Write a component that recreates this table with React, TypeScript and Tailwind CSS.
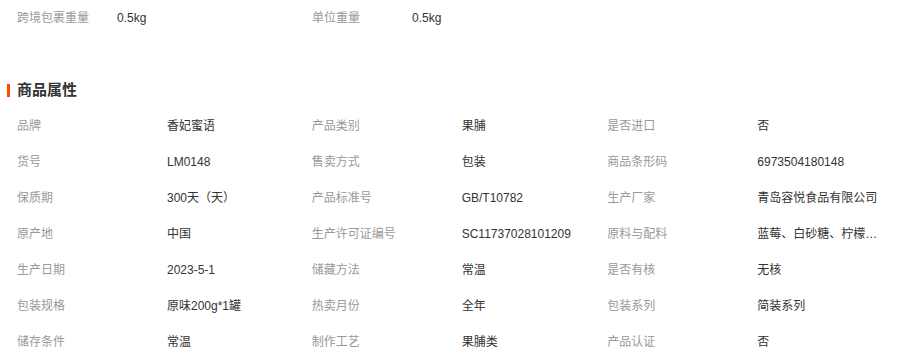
import React from "react";

const font = {
  fontFamily: '"Liberation Sans", Arial, "Noto Sans CJK SC", sans-serif',
};

const rows: [string, string][][] = [
  [["品牌", "香妃蜜语"], ["产品类别", "果脯"], ["是否进口", "否"]],
  [["货号", "LM0148"], ["售卖方式", "包装"], ["商品条形码", "6973504180148"]],
  [["保质期", "300天（天）"], ["产品标准号", "GB/T10782"], ["生产厂家", "青岛容悦食品有限公司"]],
  [["原产地", "中国"], ["生产许可证编号", "SC11737028101209"], ["原料与配料", "蓝莓、白砂糖、柠檬酸、果胶"]],
  [["生产日期", "2023-5-1"], ["储藏方法", "常温"], ["是否有核", "无核"]],
  [["包装规格", "原味200g*1罐"], ["热卖月份", "全年"], ["包装系列", "简装系列"]],
  [["储存条件", "常温"], ["制作工艺", "果脯类"], ["产品认证", "否"]],
];

export default function App() {
  return (
    <div className="w-[903px] h-[356px] bg-white overflow-hidden text-[12px]" style={font}>
      <div className="flex h-[36px] items-center pl-[17px]">
        <div className="flex w-[295px] items-center">
          <span className="w-[100px] text-[#999]">跨境包裹重量</span>
          <span className="text-[#333]">0.5kg</span>
        </div>
        <div className="flex w-[295px] items-center">
          <span className="w-[100px] text-[#999]">单位重量</span>
          <span className="text-[#333]">0.5kg</span>
        </div>
      </div>
      <div className="h-[36px]" />
      <div className="flex h-[36px] items-center">
        <div className="ml-[7px] w-[3px] h-[13px] bg-[#ff4a00]" />
        <span className="ml-[7px] text-[15px] font-bold text-[#333]">商品属性</span>
      </div>
      <div className="pl-[17px]">
        {rows.map((row, i) => (
          <div key={i} className="flex h-[36px] items-center">
            {row.map(([k, v], j) => (
              <div key={j} className={`flex items-center ${j === 0 ? "w-[295px]" : "w-[296px]"}`}>
                <span className="w-[150px] shrink-0 text-[#999] whitespace-nowrap">{k}</span>
                <span className="w-[126px] text-[#333] truncate">{v}</span>
              </div>
            ))}
          </div>
        ))}
      </div>
    </div>
  );
}
